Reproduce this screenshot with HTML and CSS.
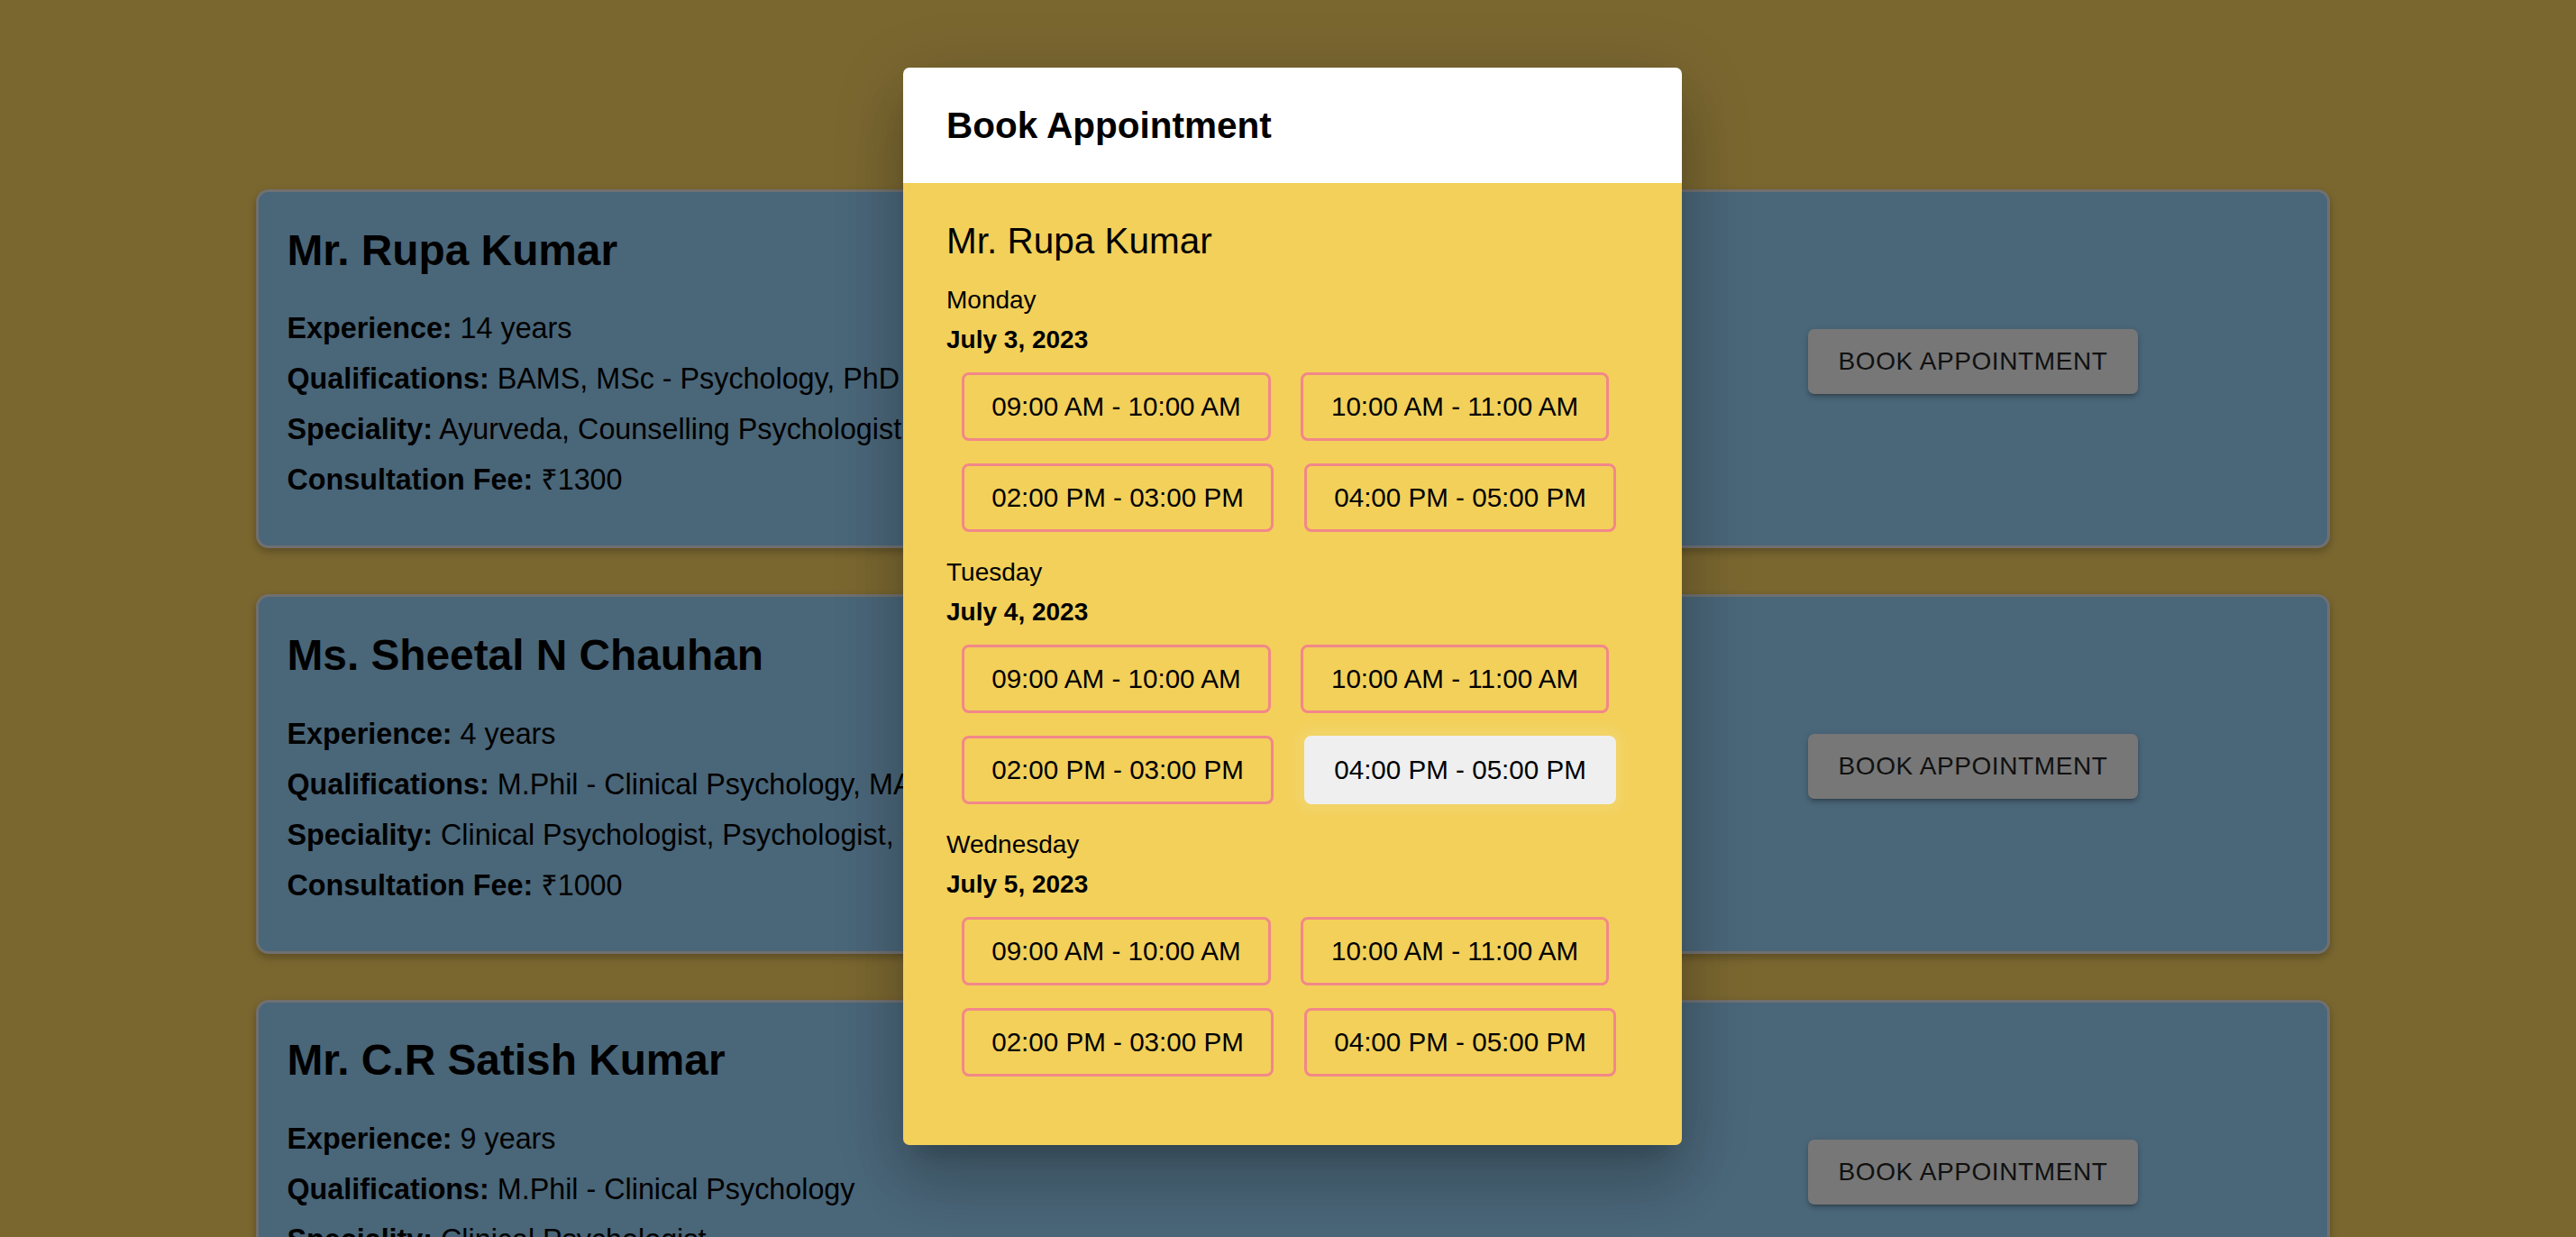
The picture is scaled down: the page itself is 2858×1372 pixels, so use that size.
FILE: index.html
```html
<!DOCTYPE html>
<html lang="en">
<head>
<meta charset="utf-8">
<title>Doctors</title>
<link rel="stylesheet" href="styles.css">
</head>
<body>
<main class="page">
  <section class="card">
    <div class="info">
      <h2 class="name">Mr. Rupa Kumar</h2>
      <p class="line"><strong>Experience:</strong> 14 years</p>
      <p class="line"><strong>Qualifications:</strong> BAMS, MSc - Psychology, PhD - Psychology</p>
      <p class="line"><strong>Speciality:</strong> Ayurveda, Counselling Psychologist, Psychologist</p>
      <p class="line"><strong>Consultation Fee:</strong> ₹1300</p>
    </div>
    <button class="book">Book Appointment</button>
  </section>
  <section class="card">
    <div class="info">
      <h2 class="name">Ms. Sheetal N Chauhan</h2>
      <p class="line"><strong>Experience:</strong> 4 years</p>
      <p class="line"><strong>Qualifications:</strong> M.Phil - Clinical Psychology, MA - Psychology</p>
      <p class="line"><strong>Speciality:</strong> Clinical Psychologist, Psychologist, Counselling</p>
      <p class="line"><strong>Consultation Fee:</strong> ₹1000</p>
    </div>
    <button class="book">Book Appointment</button>
  </section>
  <section class="card">
    <div class="info">
      <h2 class="name">Mr. C.R Satish Kumar</h2>
      <p class="line"><strong>Experience:</strong> 9 years</p>
      <p class="line"><strong>Qualifications:</strong> M.Phil - Clinical Psychology</p>
      <p class="line"><strong>Speciality:</strong> Clinical Psychologist</p>
      <p class="line"><strong>Consultation Fee:</strong> ₹800</p>
    </div>
    <button class="book">Book Appointment</button>
  </section>
</main>

<div class="backdrop"></div>

<div class="modal" role="dialog">
  <header class="modal-head">
    <h2 class="modal-title">Book Appointment</h2>
  </header>
  <div class="modal-body">
    <h3 class="doc">Mr. Rupa Kumar</h3>

    <div class="day-block">
      <p class="day">Monday</p>
      <p class="date">July 3, 2023</p>
      <div class="slots">
        <button class="slot">09:00 AM - 10:00 AM</button>
        <button class="slot">10:00 AM - 11:00 AM</button>
        <button class="slot">02:00 PM - 03:00 PM</button>
        <button class="slot">04:00 PM - 05:00 PM</button>
      </div>
    </div>

    <div class="day-block">
      <p class="day">Tuesday</p>
      <p class="date">July 4, 2023</p>
      <div class="slots">
        <button class="slot">09:00 AM - 10:00 AM</button>
        <button class="slot">10:00 AM - 11:00 AM</button>
        <button class="slot">02:00 PM - 03:00 PM</button>
        <button class="slot active">04:00 PM - 05:00 PM</button>
      </div>
    </div>

    <div class="day-block">
      <p class="day">Wednesday</p>
      <p class="date">July 5, 2023</p>
      <div class="slots">
        <button class="slot">09:00 AM - 10:00 AM</button>
        <button class="slot">10:00 AM - 11:00 AM</button>
        <button class="slot">02:00 PM - 03:00 PM</button>
        <button class="slot">04:00 PM - 05:00 PM</button>
      </div>
    </div>
  </div>
</div>
</body>
</html>
```

FILE: styles.css
```css
* { box-sizing: border-box; }

html, body {
  margin: 0;
  height: 100%;
}

body {
  font-family: "Liberation Sans", Arial, "Noto Sans", "DejaVu Sans", sans-serif;
  background: #f4ce60;
  color: #000;
  overflow: hidden;
}

/* ---------- page ---------- */
.page {
  padding: 210px 0 0 284px;
  display: flex;
  flex-direction: column;
  gap: 51px;
}

.card {
  width: 2301px;
  display: flex;
  align-items: center;
  background: #94ccf2;
  border: 3px solid #e0e0e0;
  border-radius: 14px;
  padding: 36.5px 29px 45.3px 31.5px;
  box-shadow: 0 4px 10px rgba(0, 0, 0, 0.25);
}

.info {
  flex: 1;
  min-width: 0;
}

.name {
  font-size: 47.8px;
  line-height: 56px;
  font-weight: bold;
  margin: 0 0 30.7px;
  white-space: nowrap;
}

.line {
  font-size: 32.3px;
  line-height: 56px;
  margin: 0;
  white-space: nowrap;
}

.book {
  width: 366px;
  margin: 0 181px 8px 0;
  padding: 16.15px 0;
  font-family: inherit;
  font-size: 28px;
  line-height: 40px;
  letter-spacing: 0.6px;
  text-transform: uppercase;
  color: #222;
  background: #eeeeee;
  border: none;
  border-radius: 7px;
  box-shadow: 0 5px 2px -4px rgba(0, 0, 0, 0.2),
              0 4px 4px 0 rgba(0, 0, 0, 0.14),
              0 2px 9px 0 rgba(0, 0, 0, 0.12);
}

/* ---------- modal ---------- */
.backdrop {
  position: fixed;
  inset: 0;
  background: rgba(0, 0, 0, 0.5);
}

.modal {
  position: fixed;
  left: 1002px;
  top: 75px;
  width: 864px;
  border-radius: 7px;
  overflow: hidden;
  box-shadow: 0 20px 27px -13px rgba(0, 0, 0, 0.2),
              0 44px 69px 5px rgba(0, 0, 0, 0.14),
              0 16px 84px 15px rgba(0, 0, 0, 0.12);
}

.modal-head {
  background: #ffffff;
  height: 128px;
  padding: 39.8px 48px 0;
}

.modal-title {
  margin: 0;
  font-size: 40.5px;
  line-height: 48px;
  font-weight: bold;
}

.modal-body {
  background: #f2d05a;
  padding: 40.1px 48px 76px;
}

.doc {
  margin: 0 0 24.2px;
  font-size: 40.5px;
  line-height: 48px;
  font-weight: normal;
}

.day-block + .day-block {
  margin-top: 27px;
}

.day {
  margin: 0 0 7.3px;
  font-size: 28px;
  line-height: 36px;
}

.date {
  margin: 0 0 18px;
  font-size: 28px;
  line-height: 36px;
  font-weight: bold;
}

.slots {
  display: flex;
  flex-wrap: wrap;
  column-gap: 33.4px;
  row-gap: 25.7px;
  margin-left: 16.7px;
}

.slot {
  height: 76px;
  font-family: inherit;
  font-size: 29.6px;
  line-height: 34px;
  padding: 0 30.5px;
  color: #000;
  background: transparent;
  border: 3px solid #f2878a;
  border-radius: 8px;
}

.slot.active {
  background: #efefef;
  border-color: #efefef;
  box-shadow: 0 0 8px 10px rgba(255, 255, 255, 0.07);
}
```
